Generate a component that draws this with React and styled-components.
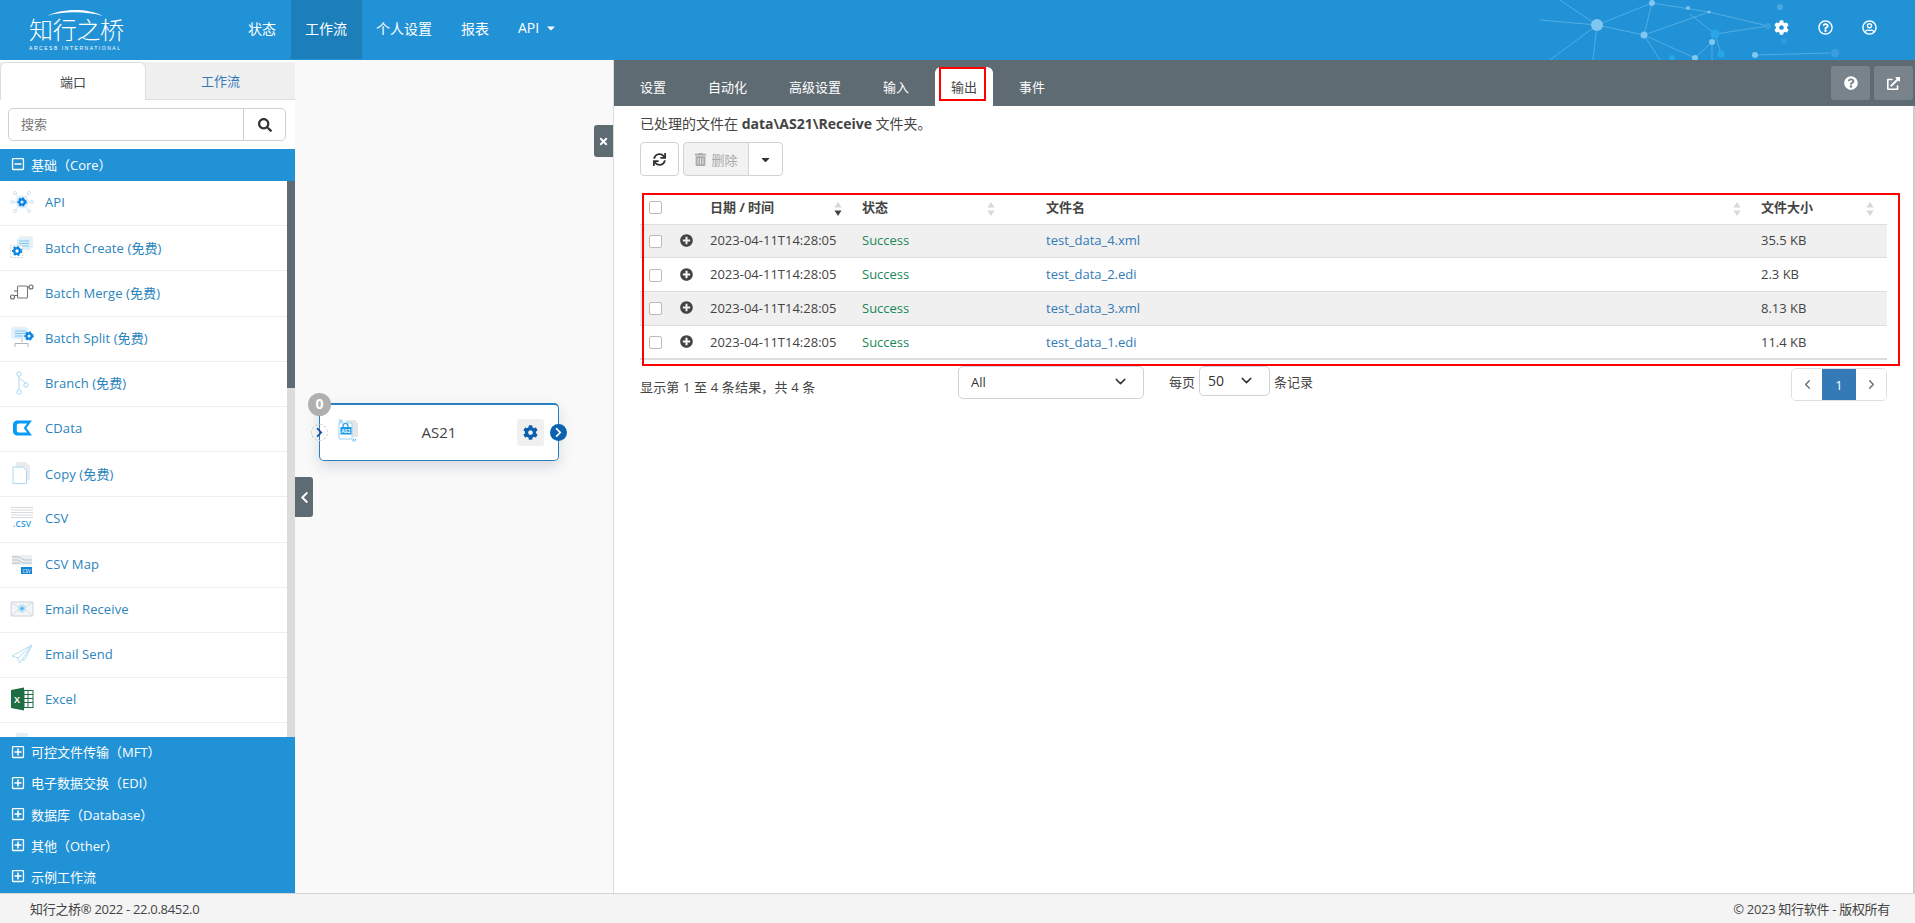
import React from 'react';
import styled, { createGlobalStyle } from 'styled-components';
import {
  FaCog, FaSearch, FaSync, FaTrashAlt, FaCaretDown, FaPlusCircle, FaQuestionCircle,
  FaRegQuestionCircle, FaRegUserCircle, FaExternalLinkAlt, FaChevronRight, FaChevronLeft,
  FaRegPlusSquare, FaRegMinusSquare, FaTimes,
} from 'react-icons/fa';
import { ChevronDown, ChevronLeft, ChevronRight } from 'lucide-react';

const BLUE = '#2192d6';
const SLATE = '#5f6b73';

const GlobalStyle = createGlobalStyle`
  * { box-sizing: border-box; }
  html, body { margin: 0; height: 100%; overflow: hidden; }
  body {
    font-family: "Open Sans", "Noto Sans CJK SC", sans-serif;
    font-size: 13px;
    color: #444;
    background: #fff;
  }
`;

const Page = styled.div`
  width: 1915px;
  height: 923px;
  display: flex;
  flex-direction: column;
`;

/* top bar */
const Header = styled.header`
  position: relative;
  height: 60px;
  flex: none;
  background: ${BLUE};
  color: #fff;
  overflow: hidden;
`;

const Logo = styled.div`
  position: absolute;
  left: 29px;
  top: 8px;
  width: 94px;
  svg { position: absolute; left: 17px; top: 0; }
`;

const LogoName = styled.div`
  margin-top: 7px;
  font-size: 24px;
  line-height: 30px;
  font-weight: 300;
  letter-spacing: -0.3px;
  white-space: nowrap;
`;

const LogoSub = styled.div`
  font-family: "Liberation Sans", sans-serif;
  font-size: 5px;
  line-height: 6px;
  letter-spacing: 1.55px;
  white-space: nowrap;
`;

const Nav = styled.nav`
  position: absolute;
  left: 233.500px;
  top: 0;
  display: flex;
  height: 59px;
`;

const NavLink = styled.a`
  display: flex;
  align-items: center;
  padding: 0 14.500px 4px;
  font-size: 14px;
  color: #fff;
  background: ${({ $active }) => ($active ? '#1c7fba' : 'transparent')};
  svg { margin-left: 6px; }
`;

const Network = styled.svg`
  position: absolute;
  left: 1500px;
  top: 0;
`;

const HeaderIcons = styled.div`
  position: absolute;
  left: 1774px;
  top: 20px;
  display: flex;
  gap: 29px;
  font-size: 15px;
  svg { display: block; }
`;

/* main area */
const Main = styled.div`
  position: relative;
  flex: 1;
  display: flex;
  min-height: 0;
`;

const Sidebar = styled.aside`
  width: 295px;
  flex: none;
  display: flex;
  flex-direction: column;
  background: #fff;
`;

const SideTabs = styled.div`
  display: flex;
  height: 40px;
  padding-top: 2px;
  background: linear-gradient(#fff 2px, #f0f0f0 2px);
  border-bottom: 1px solid #ddd;
`;

const SideTab = styled.div`
  display: flex;
  align-items: center;
  justify-content: center;
  width: ${({ $active }) => ($active ? '146px' : '149px')};
  height: ${({ $active }) => ($active ? '38px' : '37px')};
  color: ${({ $active }) => ($active ? '#444' : '#337ab7')};
  background: ${({ $active }) => ($active ? '#fff' : 'transparent')};
  border: ${({ $active }) => ($active ? '1px solid #ddd' : 'none')};
  border-bottom: none;
  border-radius: 6px 6px 0 0;
`;

const SearchBar = styled.div`
  display: flex;
  height: 33px;
  margin: 8px 9px 8px 8px;
  border: 1px solid #ccd0d4;
  border-radius: 5px;
`;

const SearchInput = styled.div`
  flex: 1;
  padding-left: 12px;
  line-height: 31px;
  color: #777;
`;

const SearchButton = styled.div`
  width: 42px;
  display: flex;
  align-items: center;
  justify-content: center;
  border-left: 1px solid #ccd0d4;
  color: #333;
  font-size: 14px;
`;

const GroupHead = styled.div`
  display: flex;
  align-items: center;
  height: ${({ $h }) => $h}px;
  padding: 0 0 2px 11px;
  background: ${BLUE};
  color: #fff;
  white-space: nowrap;
  svg { margin-right: 6px; font-size: 14px; }
`;

const PortList = styled.div`
  position: relative;
  flex: 1;
  min-height: 0;
  overflow: hidden;
  padding-right: 8px;
`;

const ScrollTrack = styled.div`
  position: absolute;
  right: 0;
  top: 0;
  bottom: 0;
  width: 8px;
  background: #dcdcdc;
`;

const ScrollThumb = styled.div`
  height: 207px;
  background: ${SLATE};
`;

const PortItem = styled.div`
  display: flex;
  align-items: center;
  height: 45.200px;
  padding: 0 0 2px 10px;
  border-bottom: 1px solid #eee;
  color: #2a84bd;
  letter-spacing: 0.1px;
  svg { flex: none; margin-right: 11px; }
`;

const Groups = styled.div`
  flex: none;
`;

/* canvas */
const Canvas = styled.div`
  position: relative;
  width: 319px;
  flex: none;
  background: #f9f9f9;
  border-right: 1px solid #ddd;
`;

const SideToggle = styled.div`
  position: absolute;
  left: ${({ $left }) => $left}px;
  top: ${({ $top }) => $top}px;
  width: ${({ $w }) => $w}px;
  height: ${({ $h }) => $h}px;
  display: flex;
  align-items: center;
  justify-content: center;
  background: ${SLATE};
  color: #fff;
  font-size: ${({ $icon }) => $icon}px;
  border-radius: ${({ $side }) => ($side === 'left' ? '3px 0 0 3px' : '0 3px 3px 0')};
`;

const Node = styled.div`
  position: absolute;
  left: 24px;
  top: 343px;
  width: 240px;
  height: 58px;
  background: #fff;
  border: 1px solid #2a7fc0;
  border-top-width: 2px;
  border-radius: 5px;
  box-shadow: 0 6px 14px rgba(40, 60, 80, 0.16);
`;

const NodeCount = styled.div`
  position: absolute;
  left: -12px;
  top: -12px;
  width: 23px;
  height: 23px;
  border-radius: 50%;
  background: #b0b0b0;
  color: #fff;
  font-size: 14px;
  font-weight: 700;
  line-height: 22px;
  text-align: center;
`;

const NodeIn = styled.div`
  position: absolute;
  left: -9px;
  top: 19px;
  width: 17px;
  height: 17px;
  border: 1px dashed #ccc;
  border-radius: 50%;
  display: flex;
  align-items: center;
  justify-content: center;
  color: #1c4fa8;
  font-size: 11px;
`;

const NodeIcon = styled.svg`
  position: absolute;
  left: 18px;
  top: 14px;
`;

const NodeName = styled.div`
  position: absolute;
  left: 0;
  right: 0;
  top: 15px;
  text-align: center;
  font-size: 15px;
  line-height: 24px;
  color: #444;
`;

const NodeGear = styled.div`
  position: absolute;
  right: 14px;
  top: 14px;
  width: 27px;
  height: 27px;
  display: flex;
  align-items: center;
  justify-content: center;
  background: #f0f0f0;
  border-radius: 3px;
  color: #0c5fae;
  font-size: 15px;
`;

const NodeOut = styled.div`
  position: absolute;
  right: -9px;
  top: 19px;
  width: 17px;
  height: 17px;
  border-radius: 50%;
  display: flex;
  align-items: center;
  justify-content: center;
  background: #0a62b0;
  color: #fff;
  font-size: 11px;
`;

/* right panel */
const Panel = styled.section`
  position: relative;
  flex: 1;
  background: #fff;
  border-right: 2px solid #ccc;
`;

const PanelBar = styled.div`
  position: relative;
  display: flex;
  align-items: flex-end;
  height: 46px;
  margin-right: -2px;
  padding-left: 10px;
  background: ${SLATE};
`;

const PanelTab = styled.div`
  display: flex;
  align-items: center;
  height: 39px;
  padding: 0 16px;
  margin-right: 10px;
  color: ${({ $active }) => ($active ? '#444' : '#fff')};
  background: ${({ $active }) => ($active ? '#fff' : 'transparent')};
  border-radius: 6px 6px 0 0;
`;

const BarButtons = styled.div`
  position: absolute;
  right: 2px;
  top: 6px;
  display: flex;
  gap: 4px;
`;

const BarButton = styled.div`
  width: 39px;
  height: 34px;
  display: flex;
  align-items: center;
  justify-content: center;
  background: #78838c;
  color: #fff;
  border-radius: 3px;
  font-size: 13px;
`;

const Redbox = styled.div`
  position: absolute;
  left: ${({ $l }) => $l}px;
  top: ${({ $t }) => $t}px;
  width: ${({ $w }) => $w}px;
  height: ${({ $h }) => $h}px;
  border: 2px solid #f00;
  pointer-events: none;
`;

const Desc = styled.p`
  margin: 0;
  position: absolute;
  left: 26px;
  top: 54px;
  font-size: 14px;
  line-height: 20px;
  b { font-weight: 700; }
`;

const Tools = styled.div`
  position: absolute;
  left: 26px;
  top: 82px;
  display: flex;
  gap: 4px;
`;

const ToolButton = styled.div`
  display: flex;
  align-items: center;
  justify-content: center;
  height: 34px;
  width: ${({ $w }) => $w}px;
  border: 1px solid #ced3d8;
  border-radius: ${({ $radius }) => $radius || '4px'};
  margin-left: ${({ $join }) => ($join ? '-5px' : '0')};
  background: ${({ $off }) => ($off ? '#f2f2f2' : '#fff')};
  color: ${({ $off }) => ($off ? '#aaa' : '#333')};
  svg { font-size: 13px; }
  span { margin-left: 4px; }
`;

const TableWrap = styled.div`
  position: absolute;
  left: 26px;
  top: 133px;
  width: 1247px;
`;

const Table = styled.table`
  width: 100%;
  table-layout: fixed;
  border-collapse: collapse;
  border-bottom: 2px solid #ddd;
`;

const Th = styled.th`
  position: relative;
  height: 31px;
  padding: 0 0 4px 8px;
  text-align: left;
  font-weight: 700;
  color: #444;
  border-bottom: 1px solid #ddd;
`;

const Td = styled.td`
  height: 33.800px;
  padding: 0 0 1px 8px;
  border-bottom: 1px solid #ddd;
  white-space: nowrap;
`;

const Tr = styled.tr`
  background: ${({ $odd }) => ($odd ? '#f0f0f0' : '#fff')};
`;

const Check = styled.span`
  display: block;
  width: 13px;
  height: 13px;
  margin: 2px 0 0 1px;
  background: #fff;
  border: 1px solid #bbb;
  border-radius: 2px;
`;

const Expand = styled.span`
  display: block;
  font-size: 13px;
  line-height: 0;
  margin-left: -8px;
  color: #444;
`;

const Status = styled.span`
  color: #198754;
`;

const FileLink = styled.a`
  color: #337ab7;
`;

const SortMark = styled.svg`
  position: absolute;
  right: ${({ $right }) => $right - 4}px;
  top: 8px;
`;

const Summary = styled.div`
  position: absolute;
  left: 26px;
  top: 317px;
  line-height: 20px;
  letter-spacing: 0.15px;
`;

const Select = styled.div`
  position: absolute;
  left: ${({ $l }) => $l}px;
  top: 306px;
  width: ${({ $w }) => $w}px;
  height: ${({ $h }) => $h}px;
  display: flex;
  align-items: center;
  justify-content: space-between;
  padding: 0 ${({ $pad }) => $pad}px 2px ${({ $text }) => $text}px;
  border: 1px solid #ced3d8;
  border-radius: 5px;
  color: #333;
  font-size: ${({ $size }) => $size}px;
`;

const Caption = styled.span`
  position: absolute;
  left: ${({ $l }) => $l}px;
  top: 312px;
  line-height: 20px;
`;

const Pager = styled.div`
  position: absolute;
  left: 1177px;
  top: 308px;
  width: 96px;
  height: 33px;
  display: flex;
  border: 1px solid #dde0e3;
  border-radius: 5px;
  overflow: hidden;
`;

const PageCell = styled.div`
  flex: ${({ $active }) => ($active ? '0 0 34px' : '1')};
  display: flex;
  align-items: center;
  justify-content: center;
  background: ${({ $active }) => ($active ? '#337ab7' : '#fff')};
  color: ${({ $active }) => ($active ? '#fff' : '#5f6b73')};
`;

const Footer = styled.footer`
  position: relative;
  flex: none;
  height: 30px;
  display: flex;
  align-items: center;
  justify-content: space-between;
  padding: 0 25px 0 30px;
  background: #f4f4f4;
  border-top: 1px solid #d4d4d4;
  letter-spacing: -0.3px;
`;

/* drawings */
const Gear = ({ cx, cy, r = 3, c = '#0a84e0' }) => (
  <g fill="none" stroke={c}>
    <circle cx={cx} cy={cy} r={r} strokeWidth={r * 0.8} />
    <circle cx={cx} cy={cy} r={r * 1.5} strokeWidth={r * 0.6} strokeDasharray={`${r * 0.7} ${r * 0.7}`} />
  </g>
);

const Ico = ({ children }) => (
  <svg width="24" height="24" viewBox="0 0 24 24">{children}</svg>
);

const icons = {
  api: (
    <Ico>
      <g fill="none" stroke="#c5dcec" strokeWidth=".8">
        {[[2, 12], [22, 12], [5, 3], [19, 3], [5, 21], [19, 21]].map(([x, y]) => (
          <g key={`${x}-${y}`}><line x1="12" y1="12" x2={x} y2={y} /><circle cx={x} cy={y} r="1.5" fill="#fff" /></g>
        ))}
      </g>
      <circle cx="12" cy="12" r="6.5" fill="#dcedf8" />
      <Gear cx={12} cy={12} r={2.6} />
    </Ico>
  ),
  create: (
    <Ico>
      <rect x="9" y="1" width="14" height="12" rx="1" fill="#eef1f4" />
      <rect x="7" y="3" width="14" height="12" rx="1" fill="#dff0fb" />
      <path d="M9 6h10M9 8.5h10M11 11h8" stroke="#7ec4f0" strokeWidth="1" />
      <rect x=".5" y="10.5" width="12" height="12" fill="#fff" stroke="#b8bfc6" strokeWidth=".7" strokeDasharray="1.5 1.5" />
      <Gear cx={7} cy={16} r={2.8} />
    </Ico>
  ),
  merge: (
    <Ico>
      <g fill="none" stroke="#666" strokeWidth="1.1">
        <rect x="7.5" y="6" width="10" height="12" rx="1" stroke="#777" />
        <circle cx="2.500" cy="17" r="2" />
        <circle cx="21" cy="7" r="2" />
        <path d="M4.500 15.500H7.500M17.500 7H19M4 11H7.500" />
      </g>
    </Ico>
  ),
  split: (
    <Ico>
      <rect x="1" y="0.5" width="16" height="11" rx="1" fill="#eef1f4" />
      <rect x="2.500" y="2" width="16" height="11" rx="1" fill="#dff0fb" />
      <path d="M5 5h11M5 7.5h11M5 10h8" stroke="#7ec4f0" strokeWidth="1" />
      <path d="M12 13v3M5 21v-3.5h13V21" fill="none" stroke="#a4adb5" strokeWidth=".9" />
      <Gear cx={19} cy={10} r={2.6} />
    </Ico>
  ),
  branch: (
    <Ico>
      <g fill="none" stroke="#a9d8f3" strokeWidth="1">
        <circle cx="9" cy="3" r="2.2" />
        <circle cx="9" cy="21" r="2.2" />
        <circle cx="16" cy="14" r="2.2" />
        <path d="M9 5.2V18.8M9.500 7c2 2.500 5 3 5.500 5" />
      </g>
    </Ico>
  ),
  cdata: (
    <Ico>
      <path d="M22 4.500H7.500C4 4.500 3 7 3 9v6c0 2 1 4.500 4.500 4.500H22L16.500 12z" fill="#0a9bf5" />
      <path d="M17 7.500H9c-1.500 0-2.200 1-2.200 2v5c0 1 .7 2 2.200 2h8l-3.200-4.500z" fill="#fff" />
    </Ico>
  ),
  copy: (
    <Ico>
      <path d="M6 1h10l4 4v14H6z" fill="#e9ecef" />
      <path d="M3 6h10l3.500 3.500V22.500H3z" fill="#fff" stroke="#a9d8f3" strokeWidth="1" />
    </Ico>
  ),
  csv: (
    <Ico>
      <g stroke="#d6dade" strokeWidth="1">
        <path d="M1 1.500h22M1 4h22M1 6.500h22M1 9h22M1 11.500h22" />
      </g>
      <text x="3" y="21" fontSize="8.500" fontFamily="Open Sans" fontWeight="600" fill="#2a9be0">.CSV</text>
    </Ico>
  ),
  csvmap: (
    <Ico>
      <path d="M2 3h20v10H2z" fill="#eef1f4" />
      <path d="M2 5h7l5 3h8M2 8h6l5 3h9M2 11h8" stroke="#b7c0c8" strokeWidth="1" fill="none" />
      <rect x="11" y="15" width="11" height="7" fill="#1384d6" />
      <text x="12.500" y="20.500" fontSize="4.500" fontFamily="Open Sans" fill="#fff">CSV</text>
    </Ico>
  ),
  receive: (
    <Ico>
      <rect x="1" y="5" width="22" height="14" rx=".8" fill="#f3f5f7" stroke="#ccd3da" strokeWidth="1" />
      <path d="M1 5l11 8 11-8M1 19l8-7M23 19l-8-7" fill="none" stroke="#ccd3da" strokeWidth=".8" />
      <circle cx="12" cy="11.500" r="4" fill="#bfe3f8" />
      <circle cx="12" cy="11.500" r="1.800" fill="#58b4ea" />
    </Ico>
  ),
  send: (
    <Ico>
      <path d="M22 3L2 14l6 2 14-13-10 15 3-.5z" fill="#fff" stroke="#b4def5" strokeWidth="1" strokeLinejoin="round" />
      <path d="M8 16l1.500 5 2.500-3" fill="none" stroke="#b4def5" strokeWidth="1" />
    </Ico>
  ),
  excel: (
    <Ico>
      <path d="M1 3l13-2.500v23L1 21z" fill="#1f6e43" />
      <rect x="14" y="3.500" width="9" height="17" fill="#fff" stroke="#1f6e43" strokeWidth="1" />
      <path d="M14 7.500h9M14 11.500h9M14 15.500h9M18 3.500v17" stroke="#1f6e43" strokeWidth="1" />
      <text x="4" y="15.500" fontSize="9" fontFamily="Liberation Sans" fontWeight="700" fill="#fff">X</text>
    </Ico>
  ),
  file: (
    <Ico>
      <path d="M6 1h12v20H6z" fill="#e4eff7" />
    </Ico>
  ),
};

const ports = [
  ['api', 'API'],
  ['create', 'Batch Create (免费)'],
  ['merge', 'Batch Merge (免费)'],
  ['split', 'Batch Split (免费)'],
  ['branch', 'Branch (免费)'],
  ['cdata', 'CData'],
  ['copy', 'Copy (免费)'],
  ['csv', 'CSV'],
  ['csvmap', 'CSV Map'],
  ['receive', 'Email Receive'],
  ['send', 'Email Send'],
  ['excel', 'Excel'],
  ['file', ''],
];

const groups = ['可控文件传输（MFT）', '电子数据交换（EDI）', '数据库（Database）', '其他（Other）', '示例工作流'];

const files = [
  ['test_data_4.xml', '35.5 KB'],
  ['test_data_2.edi', '2.3 KB'],
  ['test_data_3.xml', '8.13 KB'],
  ['test_data_1.edi', '11.4 KB'],
];

const dots = [
  [97, 25, 6], [152, 3, 3], [144, 35, 3.5], [209, 12, 1.5], [188, 8, 2], [215, 34, 4.5, '#29a6ea'],
  [212, 42, 3], [195, 58, 3], [221, 54, 3.5, '#29a6ea'], [255, 55, 3], [268, 26, 3, '#3a9fdc'],
  [280, 7, 3, '#4aa7e0'], [284, 41, 3, '#2f9bdc'], [335, 53, 4, '#3a9fdc'], [172, 58, 3, '#29a6ea'],
];

const links = [
  [97, 25, 152, 3], [97, 25, 144, 35], [152, 3, 144, 35], [152, 3, 209, 12], [144, 35, 209, 12],
  [144, 35, 195, 58], [144, 35, 160, 60], [209, 12, 268, 26], [215, 34, 268, 26], [212, 42, 195, 58],
  [212, 42, 212, 60], [215, 34, 221, 54], [255, 55, 330, 53], [97, 25, 50, 60], [97, 25, 93, 60],
  [97, 25, 40, 20], [97, 25, 60, 0], [190, 14, 215, 34],
];

const SortIcon = ({ right, active }) => (
  <SortMark $right={right} width="8" height="16" viewBox="0 0 8 16">
    <path d="M4 1l3.500 5.500h-7z" fill="#d4d8dc" />
    <path d="M4 15l3.500-5.500h-7z" fill={active ? '#444' : '#d4d8dc'} />
  </SortMark>
);

export default function App() {
  return (
    <Page>
      <GlobalStyle />
      <Header>
        <Logo>
          <svg width="60" height="10" viewBox="0 0 60 10">
            <path d="M1 8C14 1 40 -1 57 8C40 3 16 3 1 8z" fill="#fff" />
          </svg>
          <LogoName>知行之桥</LogoName>
          <LogoSub>ARCESB INTERNATIONAL</LogoSub>
        </Logo>
        <Nav>
          <NavLink>状态</NavLink>
          <NavLink $active>工作流</NavLink>
          <NavLink>个人设置</NavLink>
          <NavLink>报表</NavLink>
          <NavLink>API<FaCaretDown size={12} /></NavLink>
        </Nav>
        <Network width="415" height="60" viewBox="0 0 415 60">
          {links.map(([a, b, c, d]) => (
            <line key={`${a}${b}${c}${d}`} x1={a} y1={b} x2={c} y2={d} stroke="#7cc4ee" strokeOpacity=".6" strokeWidth=".9" />
          ))}
          {dots.map(([x, y, r, c]) => (
            <circle key={`${x}${y}`} cx={x} cy={y} r={r} fill={c || '#7fc6f1'} />
          ))}
        </Network>
        <HeaderIcons>
          <FaCog />
          <FaRegQuestionCircle />
          <FaRegUserCircle />
        </HeaderIcons>
      </Header>

      <Main>
        <Sidebar>
          <SideTabs>
            <SideTab $active>端口</SideTab>
            <SideTab>工作流</SideTab>
          </SideTabs>
          <SearchBar>
            <SearchInput>搜索</SearchInput>
            <SearchButton><FaSearch /></SearchButton>
          </SearchBar>
          <GroupHead $h={32}><FaRegMinusSquare />基础（Core）</GroupHead>
          <PortList>
            {ports.map(([icon, label]) => (
              <PortItem key={icon}>{icons[icon]}{label}</PortItem>
            ))}
            <ScrollTrack><ScrollThumb /></ScrollTrack>
          </PortList>
          <Groups>
            {groups.map((g) => (
              <GroupHead key={g} $h={31.2}><FaRegPlusSquare />{g}</GroupHead>
            ))}
          </Groups>
        </Sidebar>

        <Canvas>
          <SideToggle $left={0} $top={417} $w={18} $h={40} $icon={13} $side="right"><FaChevronLeft /></SideToggle>
          <SideToggle $left={299} $top={65} $w={19} $h={32} $icon={11} $side="left"><FaTimes /></SideToggle>
          <Node>
            <NodeCount>0</NodeCount>
            <NodeIn><FaChevronRight /></NodeIn>
            <NodeIcon width="21" height="23" viewBox="0 0 21 23">
              <path d="M8 1h9l3 3v14H8z" fill="#e4e6e8" />
              <path d="M1 4h13v16H1z" fill="#fff" stroke="#9ed5f3" strokeWidth="1" />
              <path d="M5 8V7a2.500 2.500 0 0 1 5 0v1" fill="none" stroke="#1a9be8" strokeWidth="1.200" />
              <rect x="2.500" y="8" width="11" height="7.500" fill="#1a9be8" />
              <text x="3.500" y="14" fontSize="4.800" fontWeight="700" fontFamily="Open Sans" fill="#fff">AS2</text>
              <path d="M1 .5l1.500 1.500L1 3.500M3 .5l1.500 1.500L3 3.500M16 20l-1.500 1.200L16 22.500M18 20l-1.500 1.200L18 22.500" fill="none" stroke="#1a9be8" strokeWidth=".7" />
            </NodeIcon>
            <NodeName>AS21</NodeName>
            <NodeGear><FaCog /></NodeGear>
            <NodeOut><FaChevronRight /></NodeOut>
          </Node>
        </Canvas>

        <Panel>
          <PanelBar>
            <PanelTab>设置</PanelTab>
            <PanelTab>自动化</PanelTab>
            <PanelTab>高级设置</PanelTab>
            <PanelTab>输入</PanelTab>
            <PanelTab $active>输出</PanelTab>
            <PanelTab>事件</PanelTab>
            <BarButtons>
              <BarButton><FaQuestionCircle size={14} /></BarButton>
              <BarButton><FaExternalLinkAlt /></BarButton>
            </BarButtons>
          </PanelBar>
          <Desc>已处理的文件在 <b>data\AS21\Receive</b> 文件夹。</Desc>
          <Tools>
            <ToolButton $w={39}><FaSync /></ToolButton>
            <ToolButton $w={66} $off $radius="4px 0 0 4px"><FaTrashAlt /><span>删除</span></ToolButton>
            <ToolButton $w={35} $join $radius="0 4px 4px 0"><FaCaretDown /></ToolButton>
          </Tools>
          <TableWrap>
            <Table>
              <colgroup>
                <col width="40" /><col width="22" /><col width="152" /><col width="184" /><col width="715" /><col width="134" />
              </colgroup>
              <thead>
                <tr>
                  <Th><Check /></Th>
                  <Th />
                  <Th>日期 / 时间<SortIcon right={16} active /></Th>
                  <Th>状态<SortIcon right={47} /></Th>
                  <Th>文件名<SortIcon right={16} /></Th>
                  <Th>文件大小<SortIcon right={17} /></Th>
                </tr>
              </thead>
              <tbody>
                {files.map(([name, size], i) => (
                  <Tr key={name} $odd={i % 2 === 0}>
                    <Td><Check /></Td>
                    <Td><Expand><FaPlusCircle /></Expand></Td>
                    <Td>2023-04-11T14:28:05</Td>
                    <Td><Status>Success</Status></Td>
                    <Td><FileLink>{name}</FileLink></Td>
                    <Td>{size}</Td>
                  </Tr>
                ))}
              </tbody>
            </Table>
          </TableWrap>
          <Summary>显示第 1 至 4 条结果，共 4 条</Summary>
          <Select $l={344} $w={186} $h={33} $pad={14} $text={12} $size={13}>All<ChevronDown size={17} /></Select>
          <Caption $l={555}>每页</Caption>
          <Select $l={585} $w={71} $h={30} $pad={14} $text={8} $size={14}>50<ChevronDown size={17} /></Select>
          <Caption $l={660}>条记录</Caption>
          <Pager>
            <PageCell><ChevronLeft size={15} /></PageCell>
            <PageCell $active>1</PageCell>
            <PageCell><ChevronRight size={15} /></PageCell>
          </Pager>
          <Redbox $l={325} $t={7} $w={47} $h={34} />
          <Redbox $l={28} $t={133} $w={1258} $h={173} />
        </Panel>
      </Main>

      <Footer>
        <span>知行之桥® 2022 - 22.0.8452.0</span>
        <span>© 2023 知行软件 - 版权所有</span>
      </Footer>
    </Page>
  );
}
